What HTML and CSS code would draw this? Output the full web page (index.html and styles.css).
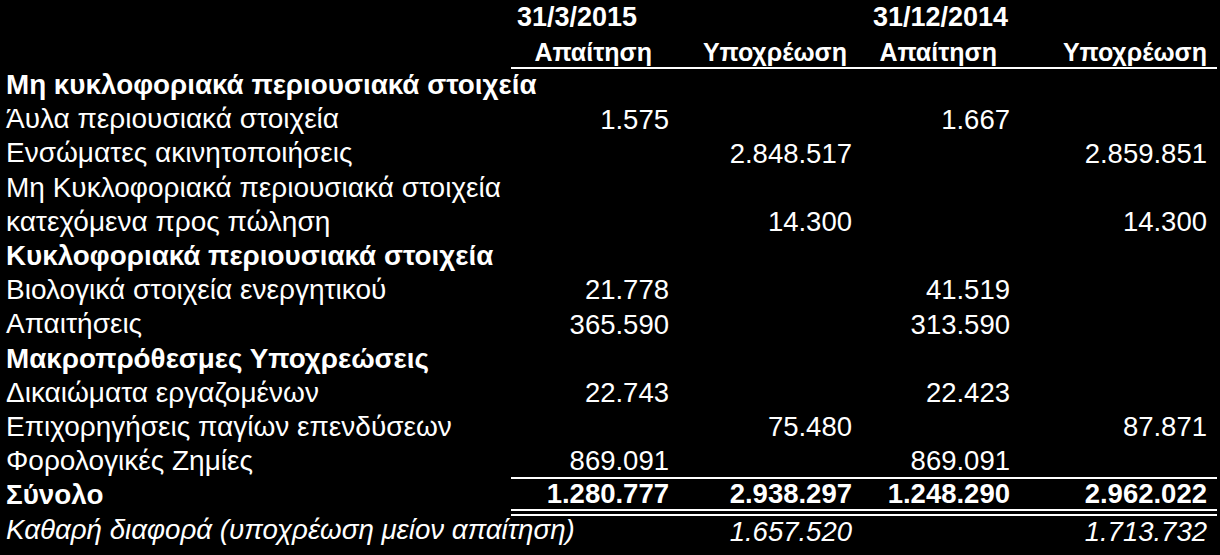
FILE: index.html
```html
<!DOCTYPE html>
<html lang="el">
<head>
<meta charset="utf-8">
<title>Αναβαλλόμενη φορολογία</title>
<link rel="stylesheet" href="styles.css">
</head>
<body>
<table class="bs">
  <colgroup>
    <col class="w-label">
    <col class="w-c1">
    <col class="w-c2">
    <col class="w-c3">
    <col class="w-c4">
  </colgroup>
  <thead>
    <tr class="r-date">
      <th></th>
      <th class="date d1">31/3/2015</th>
      <th></th>
      <th class="date d3">31/12/2014</th>
      <th></th>
    </tr>
    <tr class="r-sub">
      <th></th>
      <th class="sub s1">Απαίτηση</th>
      <th class="sub s2">Υποχρέωση</th>
      <th class="sub s3">Απαίτηση</th>
      <th class="sub s4">Υποχρέωση</th>
    </tr>
  </thead>
  <tbody>
    <tr class="sec"><td class="lab">Μη κυκλοφοριακά περιουσιακά στοιχεία</td><td></td><td></td><td></td><td></td></tr>
    <tr><td class="lab">Άυλα περιουσιακά στοιχεία</td><td class="n n1">1.575</td><td></td><td class="n n3">1.667</td><td></td></tr>
    <tr><td class="lab">Ενσώματες ακινητοποιήσεις</td><td></td><td class="n n2">2.848.517</td><td></td><td class="n n4">2.859.851</td></tr>
    <tr><td class="lab">Μη Κυκλοφοριακά περιουσιακά στοιχεία</td><td></td><td></td><td></td><td></td></tr>
    <tr><td class="lab">κατεχόμενα προς πώληση</td><td></td><td class="n n2">14.300</td><td></td><td class="n n4">14.300</td></tr>
    <tr class="sec"><td class="lab">Κυκλοφοριακά περιουσιακά στοιχεία</td><td></td><td></td><td></td><td></td></tr>
    <tr><td class="lab">Βιολογικά στοιχεία ενεργητικού</td><td class="n n1">21.778</td><td></td><td class="n n3">41.519</td><td></td></tr>
    <tr><td class="lab">Απαιτήσεις</td><td class="n n1">365.590</td><td></td><td class="n n3">313.590</td><td></td></tr>
    <tr class="sec"><td class="lab">Μακροπρόθεσμες Υποχρεώσεις</td><td></td><td></td><td></td><td></td></tr>
    <tr><td class="lab">Δικαιώματα εργαζομένων</td><td class="n n1">22.743</td><td></td><td class="n n3">22.423</td><td></td></tr>
    <tr><td class="lab">Επιχορηγήσεις παγίων επενδύσεων</td><td></td><td class="n n2">75.480</td><td></td><td class="n n4">87.871</td></tr>
    <tr class="pre-total"><td class="lab">Φορολογικές Ζημίες</td><td class="n n1">869.091</td><td></td><td class="n n3">869.091</td><td></td></tr>
    <tr class="total"><td class="lab">Σύνολο</td><td class="n n1">1.280.777</td><td class="n n2">2.938.297</td><td class="n n3">1.248.290</td><td class="n n4">2.962.022</td></tr>
    <tr class="net"><td class="lab">Καθαρή διαφορά (υποχρέωση μείον απαίτηση)</td><td></td><td class="n n2">1.657.520</td><td></td><td class="n n4">1.713.732</td></tr>
  </tbody>
</table>
</body>
</html>
```

FILE: styles.css
```css
html, body {
  margin: 0;
  padding: 0;
  background: #000;
  color: #fff;
}

body {
  font-family: "Liberation Sans", Arial, sans-serif;
}

.bs {
  border-collapse: collapse;
  table-layout: fixed;
  width: 1217px;
}

.w-label { width: 511px; }
.w-c1 { width: 164px; }
.w-c2 { width: 185px; }
.w-c3 { width: 155px; }
.w-c4 { width: 202px; }

.bs :where(th, td) {
  padding: 0;
  white-space: nowrap;
  vertical-align: middle;
  line-height: 1;
}

.r-date { height: 34px; }
.r-sub { height: 34px; }

.date {
  font-size: 27px;
  font-weight: bold;
  text-align: left;
}
.d1 { padding-left: 6px; }
.d3 { padding-left: 13px; }

.r-sub .sub {
  border-bottom: 2px solid #fff;
}

.sub {
  font-size: 25px;
  font-weight: bold;
  text-align: right;
  padding-top: 4px;
}
.s1 { padding-right: 23px; }
.s2 { padding-right: 13px; }
.s3 { padding-right: 18px; }
.s4 { padding-right: 10px; }

.bs tbody tr { height: 34.2px; }

.lab {
  font-size: 28px;
  padding-left: 6px;
}

.sec .lab {
  font-weight: bold;
  font-size: 27.8px;
}

.n {
  font-size: 27.5px;
  text-align: right;
}
.n1 { padding-right: 6px; }
.n2 { padding-right: 8px; }
.n3 { padding-right: 5px; }
.n4 { padding-right: 10px; }

.pre-total td:not(.lab) { border-bottom: 2px solid #fff; }

.total td {
  font-weight: bold;
}
.total td:not(.lab) {
  border-bottom: 7px double #fff;
}
.total { height: 30px; }
.total .lab { font-size: 27.8px; }

.net td { font-style: italic; }
.net .lab { font-size: 27.7px; }
```
